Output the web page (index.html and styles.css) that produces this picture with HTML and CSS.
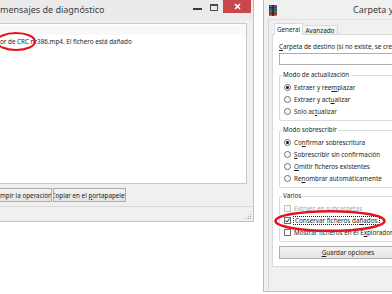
FILE: index.html
```html
<!DOCTYPE html>
<html lang="es">
<head>
<meta charset="utf-8">
<title>WinRAR</title>
<link rel="stylesheet" href="styles.css">
</head>
<body>
<div class="desk">
  <section class="win win-left">
    <header class="tb">
      <span class="tb-title">mensajes de diagnóstico</span>
      <span class="tb-ctrl">
        <span class="tb-min"></span>
        <span class="tb-max"></span>
        <span class="tb-close"><svg width="7" height="7" viewBox="0 0 7 7"><path d="M1 1L6 6M6 1L1 6" stroke="#fff" stroke-width="1.6"/></svg></span>
      </span>
    </header>
    <div class="client-left">
      <div class="msglist">
        <div class="msg-head"></div>
        <div class="msg">or de CRC nr386.mp4. El fichero está dañado</div>
      </div>
      <div class="btnrow">
        <div class="btn btn-a"><span>Interrumpir la operación</span></div>
        <div class="btn btn-b"><span>Copiar en el <u>p</u>ortapapeles</span></div>
      </div>
      <div class="status">
        <svg class="grip" width="7" height="7" viewBox="0 0 7 7"><g fill="#a8a8a8"><rect x="5" y="1" width="1" height="1"/><rect x="3" y="3" width="1" height="1"/><rect x="5" y="3" width="1" height="1"/><rect x="1" y="5" width="1" height="1"/><rect x="3" y="5" width="1" height="1"/><rect x="5" y="5" width="1" height="1"/></g></svg>
      </div>
    </div>
  </section>

  <section class="win win-right">
    <header class="tb tb-r">
      <svg class="app-icon" width="8" height="11" viewBox="0 0 8 11">
        <rect x="0.5" y="0.5" width="7" height="2.2" fill="#8b3fb0" stroke="#2a1a3a" stroke-width="0.6"/>
        <rect x="0.5" y="3" width="7" height="2.2" fill="#2f6fd6" stroke="#1a2a4a" stroke-width="0.6"/>
        <rect x="0.5" y="5.5" width="7" height="2.2" fill="#3aa545" stroke="#163a1a" stroke-width="0.6"/>
        <rect x="0.5" y="8" width="7" height="2.2" fill="#d8342e" stroke="#4a1614" stroke-width="0.6"/>
        <rect x="3.3" y="0" width="1.4" height="11" fill="#222"/>
      </svg>
      <span class="tb-title tb-title-r">Carpeta y opciones de extracción</span>
    </header>
    <div class="client-right">
      <div class="tabs">
        <div class="tab tab-sel">General</div>
        <div class="tab tab-off">Avanzado</div>
      </div>
      <div class="panel">
        <div class="lbl-dest"><u>C</u>arpeta de destino (si no existe, se creará)</div>
        <div class="input"></div>

        <fieldset class="grp g1">
          <legend>Modo de actualización</legend>
          <div class="opt"><span class="rb on"></span>Extraer y ree<u>m</u>plazar</div>
          <div class="opt"><span class="rb"></span>Extraer y act<u>u</u>alizar</div>
          <div class="opt"><span class="rb"></span>Solo ac<u>t</u>ualizar</div>
        </fieldset>

        <fieldset class="grp g2">
          <legend>Modo sobrescribir</legend>
          <div class="opt"><span class="rb on"></span>Co<u>n</u>firmar sobrescritura</div>
          <div class="opt"><span class="rb"></span><u>S</u>obrescribir sin confirmación</div>
          <div class="opt"><span class="rb"></span><u>O</u>mitir ficheros existentes</div>
          <div class="opt"><span class="rb"></span>Re<u>n</u>ombrar automáticamente</div>
        </fieldset>

        <fieldset class="grp g3">
          <legend>Varios</legend>
          <div class="opt dis"><span class="cb"></span>Extraer en subcarpetas</div>
          <div class="opt"><span class="cb"><svg width="5" height="5" viewBox="0 0 5 5"><path d="M0.4 2.6L1.8 4.1L4.6 0.6" fill="none" stroke="#1a1a1a" stroke-width="1"/></svg></span><span class="focus">Conservar ficheros da<u>ñ</u>ados</span></div>
          <div class="opt"><span class="cb"></span>Mostrar ficheros en el E<u>x</u>plorador</div>
        </fieldset>

        <div class="btn btn-save"><span><u>G</u>uardar opciones</span></div>
      </div>
    </div>
  </section>
</div>

<svg class="marks" width="392" height="294" viewBox="0 0 392 294">
  <ellipse cx="16" cy="41.5" rx="19" ry="8.5" fill="none" stroke="#e2151f" stroke-width="2"/>
  <ellipse cx="330" cy="221" rx="54.5" ry="9.8" fill="none" stroke="#e2151f" stroke-width="2.6"/>
</svg>
</body>
</html>
```

FILE: styles.css
```css
* { box-sizing: border-box; }

html, body {
  margin: 0;
  padding: 0;
}

body {
  width: 392px;
  height: 294px;
  overflow: hidden;
  position: relative;
  background: #ffffff;
  font-family: "Noto Sans", "Open Sans", sans-serif;
  font-size: 6.3px;
  color: #1e1e1e;
}

u { text-decoration: underline; text-underline-offset: 1px; }

.desk {
  display: flex;
  align-items: flex-start;
  width: 392px;
  height: 294px;
  overflow: hidden;
}

/* ---------- window chrome ---------- */
.win {
  flex: none;
  display: flex;
  flex-direction: column;
  background: #f0f0f0;
}

.tb {
  flex: none;
  height: 20px;
  display: flex;
  align-items: flex-start;
  background: #ebebeb;
}

.tb-title {
  font-size: 9px;
  line-height: 19px;
  color: #3c3c3c;
  white-space: nowrap;
}

.tb-ctrl {
  margin-left: auto;
  display: flex;
  align-items: flex-start;
}

.tb-min {
  width: 9px;
  height: 2px;
  margin-top: 8px;
  background: #3a3a3a;
}

.tb-max {
  width: 8px;
  height: 7px;
  margin: 4px 0 0 8px;
  border: 1px solid #4a4a4a;
  border-top-width: 2px;
}

.tb-close {
  width: 28px;
  height: 13px;
  margin: 0 2px 0 5px;
  background: #c9464b;
  display: flex;
  align-items: center;
  justify-content: center;
}

/* ---------- left window ---------- */
.win-left {
  width: 254px;
  height: 222px;
  border-right: 1px solid #c2c2c2;
  border-bottom: 1px solid #c2c2c2;
}

.client-left {
  flex: 1;
  display: flex;
  flex-direction: column;
}

.msglist {
  flex: none;
  height: 161px;
  margin: 3px 6px 0 0;
  background: #ffffff;
  border: 1px solid #c9c9c9;
  border-left: 0;
}

.msg-head {
  height: 10px;
  margin-top: 1px;
  background: #f9f9fb;
}

.msg {
  margin-top: 1px;
  line-height: 11px;
  white-space: nowrap;
}

.btnrow {
  flex: none;
  display: flex;
  height: 14px;
  margin-top: 4px;
}

.btn {
  flex: none;
  display: flex;
  align-items: center;
  justify-content: center;
  overflow: hidden;
  white-space: nowrap;
  border: 1px solid #acacac;
  background: linear-gradient(#f3f3f3, #e3e3e3);
  color: #1e1e1e;
}

.btn-a {
  width: 73px;
  height: 14px;
  margin-left: -21px;
}

.btn-b {
  width: 73px;
  height: 14px;
  margin-left: 1px;
}

.status {
  flex: 1;
  margin-top: 4px;
  border-top: 1px solid #dadada;
  display: flex;
  justify-content: flex-end;
  align-items: flex-end;
  padding: 0 1px 1px 0;
}

.grip { display: block; }

/* ---------- right window ---------- */
.win-right {
  width: 440px;
  height: 292px;
  margin-left: 9px;
  border-left: 1px solid #bdbdbd;
  border-bottom: 1px solid #bdbdbd;
}

.tb-r {
  height: 19px;
  background: #f0f0f0;
}

.app-icon {
  display: block;
  margin: 5px 0 0 5px;
}

.tb-title-r {
  margin-left: 76px;
}

.client-right {
  flex: 1;
  margin-left: 4px;
  border-left: 1px solid #d6d6d6;
  border-top: 1px solid #e0e0e0;
  padding: 3px 0 0 3px;
  display: flex;
  flex-direction: column;
}

.tabs {
  flex: none;
  display: flex;
  align-items: flex-end;
  height: 12px;
  padding-left: 2px;
  margin-bottom: -1px;
  position: relative;
  z-index: 1;
}

.tab {
  display: flex;
  align-items: center;
  justify-content: center;
  white-space: nowrap;
  border: 1px solid #d9d9d9;
}

.tab-sel {
  width: 29px;
  height: 12px;
  background: #ffffff;
  border-bottom: 0;
}

.tab-off {
  width: 35px;
  height: 9px;
  margin-bottom: 1px;
  border-left: 0;
  border-bottom: 0;
  background: linear-gradient(#f7f7f7, #ececec);
}

.panel {
  flex: none;
  height: 233px;
  background: #ffffff;
  border: 1px solid #d9d9d9;
  padding-left: 6px;
  display: flex;
  flex-direction: column;
}

.lbl-dest {
  margin-top: 7px;
  line-height: 10px;
  white-space: nowrap;
}

.input {
  flex: none;
  width: 400px;
  height: 12px;
  margin-top: 1px;
  border: 1px solid #abadb3;
  background: #ffffff;
}

.grp {
  flex: none;
  width: 138px;
  min-width: 0;
  margin: 0;
  padding: 2px 0 3px 4px;
  border: 1px solid #dcdcdc;
  border-radius: 2px;
}

.grp legend {
  padding: 0 1px;
  margin-left: -2px;
  line-height: 8px;
  white-space: nowrap;
}

.g1 { margin-top: 6px; }
.g2 { margin-top: 5px; }
.g3 { margin-top: 4px; }

.opt {
  display: flex;
  align-items: center;
  height: 12px;
  white-space: nowrap;
}

.rb {
  flex: none;
  width: 7px;
  height: 7px;
  margin-right: 3px;
  border: 1px solid #6e6e6e;
  border-radius: 50%;
  background: #fdfdfd;
  display: flex;
  align-items: center;
  justify-content: center;
}

.rb.on::after {
  content: "";
  width: 3px;
  height: 3px;
  border-radius: 50%;
  background: #111;
}

.cb {
  flex: none;
  width: 7px;
  height: 7px;
  margin-right: 3px;
  border: 1px solid #6e6e6e;
  background: #fdfdfd;
  display: flex;
  align-items: center;
  justify-content: center;
}

.cb svg { display: block; }

.dis { color: #a6a6a6; }
.dis .cb { border-color: #c2c2c2; background: #f4f4f4; }

.focus {
  outline: 1px dotted #222;
  padding: 0 1px;
  line-height: 7px;
}

.btn-save {
  width: 138px;
  height: 13px;
  margin-top: 4px;
}

/* ---------- annotation overlay ---------- */
.marks {
  position: absolute;
  left: 0;
  top: 0;
  pointer-events: none;
}
```
